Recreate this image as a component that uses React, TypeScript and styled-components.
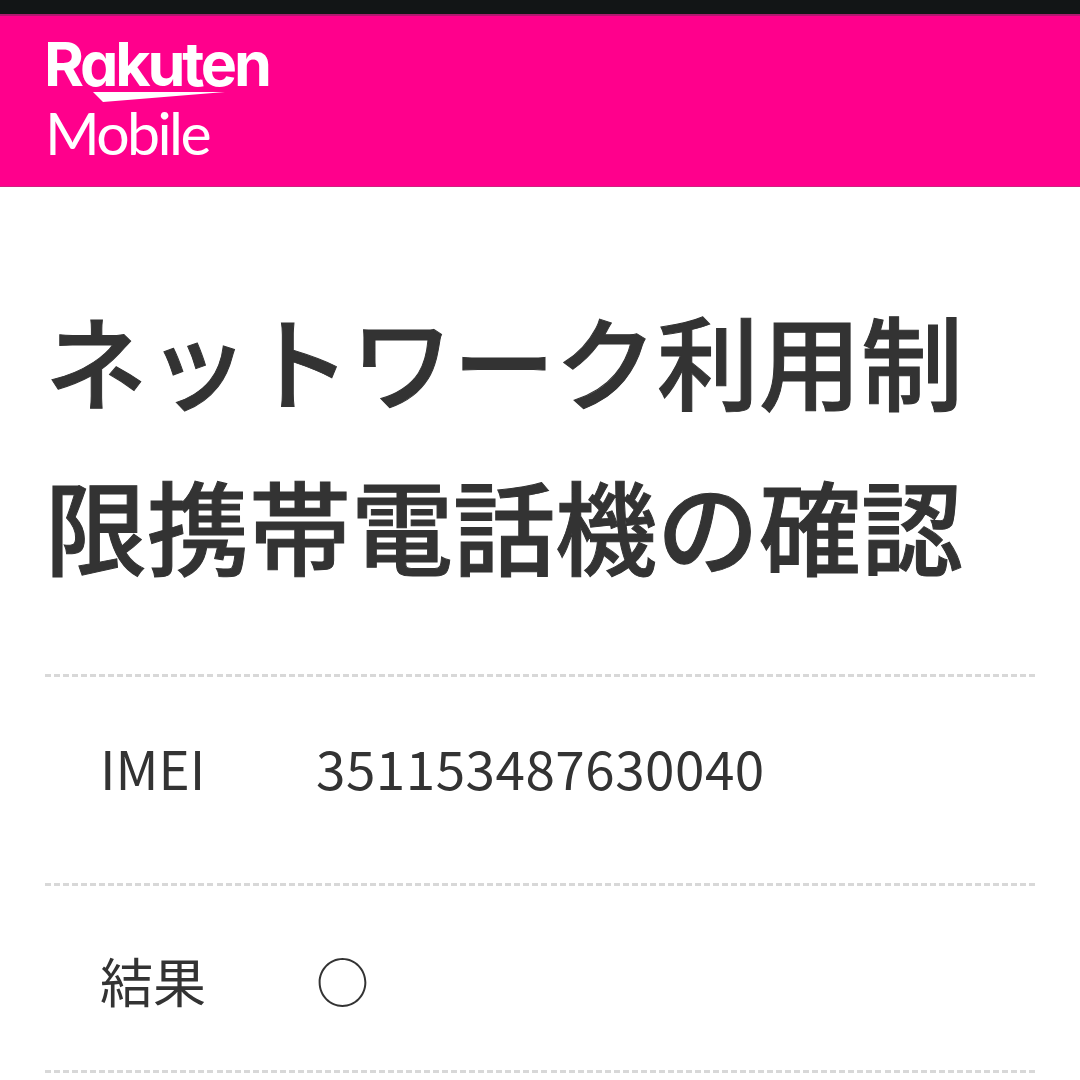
import React from 'react';
import styled, { createGlobalStyle } from 'styled-components';

const GlobalStyle = createGlobalStyle`
  html, body {
    margin: 0;
    padding: 0;
    background: #fff;
    height: 1080px;
    overflow: hidden;
  }
  body {
    font-family: 'Noto Sans CJK JP', 'Noto Sans', sans-serif;
    color: #333;
  }
`;

const StatusBar = styled.div`
  height: 14px;
  background: #121516;
  border-bottom: 2px solid #b0196f;
`;

const Header = styled.header`
  height: 171px;
  background: #ff008c;
  border-bottom: 1px solid #d0207f;
  padding: 20px 0 0 44px;
  box-sizing: border-box;
`;

const Logo = styled.div`
  display: flex;
  flex-direction: column;
  align-items: flex-start;
  color: #fff;
`;

const Brand = styled.div`
  font-family: 'Inter', sans-serif;
  font-feature-settings: 'cv11' 1;
  font-weight: 700;
  font-size: 61px;
  line-height: 56px;
  letter-spacing: -3.2px;
`;

const Swoosh = styled.svg`
  display: block;
  width: 134px;
  height: 11px;
  margin: 0 0 0 49px;
`;

const Product = styled.div`
  font-family: 'Lato', sans-serif;
  font-weight: 400;
  font-size: 59px;
  line-height: 54px;
  letter-spacing: -2.6px;
  margin: 3px 0 0 1px;
`;

const Main = styled.main`
  padding: 89px 45px 0;
`;

const Title = styled.h1`
  margin: 0;
  font-size: 102px;
  font-weight: 500;
  line-height: 165px;
  color: #333;
  white-space: nowrap;
  -webkit-text-stroke: 1px #333;
`;

const dashes = `repeating-linear-gradient(90deg, #d8d8d8 0 6px, transparent 6px 9.027px)`;

const ResultList = styled.dl`
  margin: 68px 0 0;
  padding-top: 3px;
  background: ${dashes} top / 100% 3px no-repeat;
`;

const ResultRow = styled.div<{ $height: number; $lift: number; $drop: number }>`
  display: flex;
  align-items: center;
  height: ${(p) => p.$height - p.$lift - p.$drop}px;
  padding: ${(p) => p.$drop}px 0 ${(p) => p.$lift + 3}px 55px;
  background: ${dashes} bottom / 100% 3px no-repeat;
`;

const Label = styled.dt`
  width: 216px;
  font-size: 53px;
  font-weight: 400;
  line-height: 1;
`;

const Value = styled.dd`
  margin: 0;
  font-size: 53px;
  font-weight: 400;
  line-height: 1;
  letter-spacing: 0.5px;
`;

const App: React.FC = () => (
  <>
    <GlobalStyle />
    <StatusBar />
    <Header>
      <Logo>
        <Brand>Rakuten</Brand>
        <Swoosh viewBox="0 0 134 11">
          <path d="M0 0 L132 0 L10 10 Z" fill="#fff" />
        </Swoosh>
        <Product>Mobile</Product>
      </Logo>
    </Header>
    <Main>
      <Title>
        ネットワーク利用制
        <br />
        限携帯電話機の確認
      </Title>
      <ResultList>
        <ResultRow $height={206} $lift={26} $drop={0}>
          <Label>IMEI</Label>
          <Value>351153487630040</Value>
        </ResultRow>
        <ResultRow $height={184} $lift={0} $drop={5}>
          <Label>結果</Label>
          <Value>○</Value>
        </ResultRow>
      </ResultList>
    </Main>
  </>
);

export default App;
